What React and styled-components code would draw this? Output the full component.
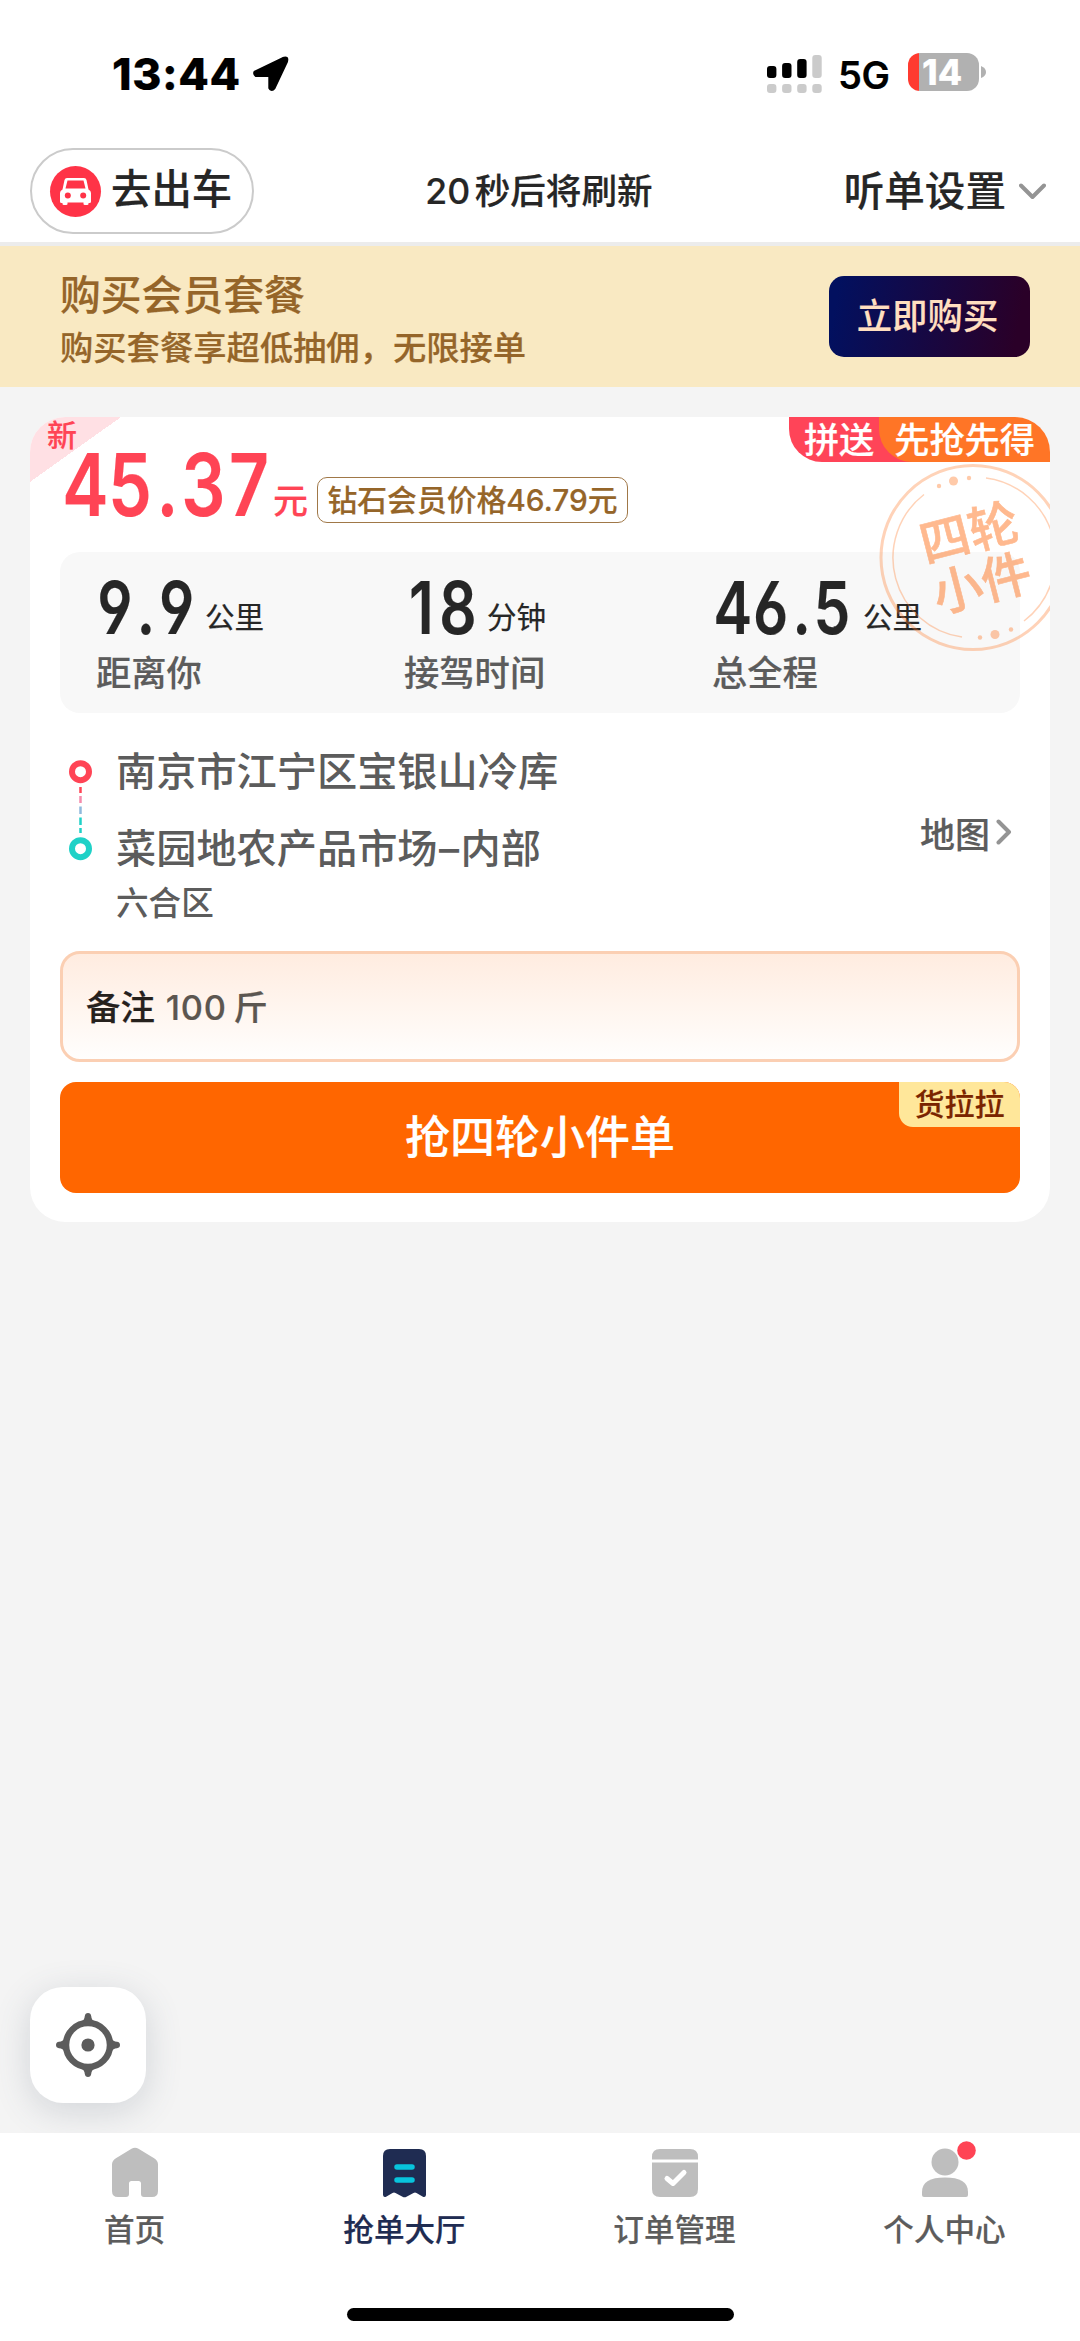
import styled, { createGlobalStyle } from 'styled-components';

const GlobalStyle = createGlobalStyle`
  * {
    box-sizing: border-box;
  }

  body {
    margin: 0;
    background-color: #f4f4f4;
    color: #262626;
    font-family: Inter, 'Noto Sans CJK SC', sans-serif;
    font-weight: 500;
    -webkit-text-stroke: 0.2px;
  }

  svg {
    display: block;
  }
`;

const Screen = styled.div`
  width: 1080px;
  height: 2341px;
  display: flex;
  flex-direction: column;
  overflow: hidden;
  white-space: nowrap;
`;

/* status bar */

const StatusBar = styled.div`
  height: 148px;
  padding: 50px 94px 0 112px;
  display: flex;
  justify-content: space-between;
  background-color: #fff;
  color: #000;
`;

const StatusGroup = styled.div`
  height: 48px;
  display: flex;
  align-items: center;
`;

const Clock = styled.span`
  width: 140px;
  font-size: 44.5px;
  font-weight: 800;
  letter-spacing: 0.6px;
  line-height: 48px;
`;

const Network = styled.span`
  width: 68px;
  padding: 2px 0 0 15px;
  font-size: 38px;
  font-weight: 600;
  letter-spacing: -0.5px;
`;

const Battery = styled.div`
  width: 71px;
  height: 38px;
  margin: -4px 2px 0 17px;
  padding-left: 14px;
  border-radius: 12px;
  background: linear-gradient(90deg, #ff3b30 10.5px, #b1b1b1 10.5px);
  color: #fff;
  font-size: 35.5px;
  font-weight: 800;
  line-height: 39px;
`;

/* header */

const Header = styled.div`
  height: 98px;
  padding: 0 34px 0 30px;
  display: flex;
  justify-content: space-between;
  align-items: flex-start;
  background-color: #fff;
  border-bottom: 4px solid #ececec;
`;

const GoButton = styled.div`
  width: 224px;
  height: 86px;
  padding-left: 18px;
  display: flex;
  align-items: center;
  border: 2px solid #cbcbcb;
  border-radius: 43px;
  font-size: 40.4px;
  line-height: 80px;
`;

const CarBadge = styled.div`
  width: 51px;
  height: 51px;
  margin-right: 10px;
  border-radius: 50%;
  background-color: #ff3347;
`;

const GoLabel = styled.span`
  padding-bottom: 2px;
`;

const Countdown = styled.div`
  width: 230px;
  margin-right: 17px;
  font-size: 35.6px;
  line-height: 88px;
  word-spacing: -5px;
`;

const Setting = styled.div`
  display: flex;
  align-items: center;
  gap: 13px;
  font-size: 40.6px;
  line-height: 87px;
`;

/* membership banner */

const Banner = styled.div`
  height: 141px;
  padding: 0 50px 0 60px;
  display: flex;
  justify-content: space-between;
  align-items: center;
  background-color: #f9e9c2;
  color: #956529;
`;

const BannerTitle = styled.div`
  padding-top: 4px;
  font-size: 40.8px;
  line-height: 58px;
`;

const BannerText = styled.div`
  font-size: 33.3px;
  line-height: 48px;
`;

const BuyButton = styled.div`
  width: 201px;
  height: 81px;
  padding-right: 4px;
  border-radius: 15px;
  background: linear-gradient(100deg, #02105f 5%, #2a0028 92%);
  color: #ffdfc0;
  font-size: 35.4px;
  line-height: 82px;
  text-align: center;
`;

/* order card */

const Main = styled.div`
  flex: 1;
  padding: 30px 30px 0;
  display: flex;
  flex-direction: column;
  justify-content: space-between;
  align-items: flex-start;
  background-color: #f4f4f4;
`;

const Card = styled.div`
  position: relative;
  width: 1020px;
  height: 805px;
  padding: 0 30px;
  border-radius: 35px;
  background-color: #fff;
  overflow: hidden;
`;

const NewCorner = styled.div`
  position: absolute;
  top: 0;
  left: 0;
  width: 91px;
  height: 65px;
  padding-left: 17px;
  background: linear-gradient(to bottom right, #ffe0e4 50%, transparent 50%);
  color: #ff4455;
  font-size: 30px;
  line-height: 37px;
`;

const Ribbons = styled.div`
  position: absolute;
  top: 0;
  right: 0;
  height: 45px;
  display: flex;
  color: #fff;
  font-size: 35.2px;
  line-height: 47px;
`;

const Ribbon = styled.div`
  height: 45px;
  padding-left: 15px;
  padding-right: ${(props) => (props.$tucked ? '43px' : '15px')};
  margin-right: ${(props) => (props.$tucked ? '-38px' : '0')};
  border-bottom-left-radius: 33px;
  background-color: ${(props) => props.$color};
`;

const Stamp = styled.svg`
  position: absolute;
  top: 43px;
  left: 846px;
`;

const PriceRow = styled.div`
  height: 135px;
  display: flex;
  align-items: flex-end;
  color: #ff4455;
`;

/* Inter squeezed to the width of a condensed face */
const Figure = styled.div`
  width: ${(props) => props.$width}px;
  margin-left: ${(props) => props.$indent || 0}px;
  margin-bottom: ${(props) => props.$lift || 0}px;
  font-size: ${(props) => props.$size}px;
  font-weight: 600;
  font-feature-settings: 'cv03' 1, 'cv04' 1;
  font-variant-numeric: ${(props) => (props.$loose ? 'normal' : 'tabular-nums')};
  letter-spacing: ${(props) => (props.$loose ? '7px' : '0')};
  line-height: 1;
  transform: scaleX(0.8);
  transform-origin: left;
`;

const Point = styled.span`
  margin: 0 0.07em;
`;

const Yuan = styled.div`
  width: 44px;
  font-size: 35px;
  line-height: 50px;
  margin-bottom: 26px;
`;

const MemberPrice = styled.div`
  width: 311px;
  height: 46px;
  margin-bottom: 29px;
  border: 1.5px solid #a07848;
  border-radius: 10px;
  color: #956529;
  font-size: 29.8px;
  line-height: 44px;
  text-align: center;
`;

const Stats = styled.div`
  height: 161px;
  padding: 0 35px 0 36px;
  display: grid;
  grid-template-columns: 308px 308px 1fr;
  border-radius: 20px;
  background-color: #f8f8f8;
`;

const StatValue = styled.div`
  height: 92px;
  display: flex;
  align-items: flex-end;
`;

const StatUnit = styled.span`
  font-size: 29.6px;
  font-weight: 400;
  line-height: 44px;
  padding-bottom: 5px;
`;

const StatLabel = styled.div`
  padding-top: 5px;
  color: #5c5c5c;
  font-size: 35.3px;
  line-height: 50px;
`;

const Route = styled.div`
  height: 238px;
  padding: 34px 8px 0;
  display: flex;
  color: #5c5c5c;
`;

const Stops = styled.div`
  flex: 1;
  padding: 2px 0 0 22px;
  -webkit-text-stroke: 0;
`;

const Stop = styled.div`
  height: 77px;
  font-size: 40.2px;
  line-height: 46px;
`;

const Dash = styled.span`
  margin: 0 1.5px;
`;

const District = styled.div`
  font-size: 32.6px;
  line-height: 40px;
  margin-top: -20px;
`;

const MapLink = styled.div`
  height: 150px;
  padding-top: 20px;
  display: flex;
  align-items: center;
  gap: 6px;
  font-size: 35px;
`;

const Remark = styled.div`
  height: 111px;
  padding-left: 23px;
  border: 3px solid #fbcfb3;
  border-radius: 20px;
  background: linear-gradient(#ffece0, #fffefd);
  color: #5c5650;
  font-size: 34.4px;
  line-height: 107px;
  word-spacing: -3px;

  b {
    margin-right: 11px;
    color: #26211d;
    font-weight: 500;
  }
`;

const Weight = styled.span`
  letter-spacing: 0.7px;
`;

const GrabButton = styled.div`
  position: relative;
  height: 111px;
  margin-top: 20px;
  border-radius: 16px;
  background-color: #ff6600;
  color: #fff;
  font-size: 45px;
  line-height: 112px;
  text-align: center;
  overflow: hidden;
`;

const Platform = styled.span`
  position: absolute;
  top: 0;
  right: 0;
  width: 121px;
  height: 45px;
  border-bottom-left-radius: 14px;
  background-color: #ffe79a;
  color: #7a2400;
  font-size: 30px;
  line-height: 45px;
`;

const Locate = styled.div`
  width: 116px;
  height: 116px;
  margin-bottom: 30px;
  display: grid;
  place-items: center;
  border-radius: 33px;
  background-color: #fff;
  box-shadow: 0 8px 36px rgba(70, 85, 105, 0.2);
`;

/* bottom tabs */

const TabBar = styled.div`
  position: relative;
  height: 208px;
  display: flex;
  flex-direction: column;
  align-items: center;
  justify-content: space-between;
  background-color: #fff;
  padding-bottom: 20px;
`;

const Tabs = styled.div`
  width: 100%;
  display: grid;
  grid-template-columns: repeat(4, 1fr);
`;

const Tab = styled.div`
  padding: 13px 1px 0 0;
  display: flex;
  flex-direction: column;
  align-items: center;
  color: ${(props) => (props.$active ? '#1f2c52' : '#5c5c5c')};
  font-size: 30.6px;
  line-height: 44px;

  svg {
    margin-bottom: 10px;
    overflow: visible;
  }
`;

const HomeIndicator = styled.div`
  width: 387px;
  height: 13px;
  border-radius: 7px;
  background-color: #000;
`;

const ArrowIcon = () => (
  <svg width="38" height="38" viewBox="0 0 38 38">
    <path
      d="M3 17 L31 3.5 Q36 1.5 34.5 6.500 L22 33 Q20.500 35 18.500 34 L17.800 33 V20.500 H4 Q2 19 3 17 Z"
      stroke="#000"
      strokeWidth="3"
      strokeLinejoin="round"
    />
  </svg>
);

const SignalIcon = () => (
  <svg width="56" height="40" viewBox="0 0 56 40">
    {[12, 9, 5, 1].map((top, i) => (
      <g key={top} fill={i < 3 ? '#000' : '#cbcbcb'}>
        <rect x={i * 15.1} y={top} width="9.4" height={24 - top} rx="3" />
        <rect x={i * 15.1} y="30" width="9.4" height="9" rx="3" fill="#cbcbcb" />
      </g>
    ))}
  </svg>
);

const CarIcon = () => (
  <svg width="51" height="51" viewBox="0 0 51 51">
    <path
      d="M17 12 H34 Q36 12 36.500 14 L38.500 23.500 Q41 24.500 41 27 V35.500 Q41 37 39.500 37 H38.500 V38 Q38.500 39 37 39 H35 Q33.500 39 33.500 38 V36.500 H17.500 V38 Q17.500 39 16 39 H14 Q12.500 39 12.500 38 V37 H11.500 Q10 37 10 35.500 V27 Q10 24.500 12.500 23.500 L14.500 14 Q15 12 17 12 Z"
      fill="#fff"
    />
    <path d="M17.500 14.500 H33.500 L35.500 22.500 H15.500 Z" fill="#ff3347" />
    <circle cx="17.800" cy="29.500" r="3" fill="#ff3347" />
    <circle cx="33.200" cy="29.500" r="3" fill="#ff3347" />
  </svg>
);

const Chevron = ({ d, width, height }) => (
  <svg width={width} height={height}>
    <path
      d={d}
      fill="none"
      stroke="#949494"
      strokeWidth="4"
      strokeLinecap="round"
      strokeLinejoin="round"
    />
  </svg>
);

const StampMark = () => (
  <Stamp width="190" height="196" viewBox="0 0 190 196" fill="#ff7a2a">
    <g fill="none" stroke="#ff7a2a" opacity="0.33">
      <circle cx="97" cy="97.500" r="92" strokeWidth="3" />
      <path d="M48 34.500 A80 80 0 0 0 86 177" strokeWidth="1.500" />
      <path d="M110 18 A80 80 0 0 1 148 161" strokeWidth="1.500" />
    </g>
    <g opacity="0.4">
      <circle cx="63" cy="26" r="2.200" />
      <circle cx="77.500" cy="21" r="4.500" />
      <circle cx="93" cy="18" r="2.200" />
      <circle cx="104" cy="177.500" r="2.200" />
      <circle cx="119" cy="174.500" r="4.500" />
      <circle cx="135" cy="169.500" r="2.200" />
    </g>
    <g
      opacity="0.52"
      fontSize="50"
      textAnchor="middle"
      stroke="#ff7a2a"
      strokeWidth="0.6"
      transform="rotate(-14.5 100 97)"
    >
      <text x="99.500" y="90">
        四轮
      </text>
      <text x="99" y="142">
        小件
      </text>
    </g>
  </Stamp>
);

const RouteLine = () => (
  <svg width="26" height="116" viewBox="0 0 26 116">
    <circle cx="12.500" cy="24.700" r="8.500" fill="none" stroke="#ff4455" strokeWidth="6" />
    <g strokeWidth="2.500">
      <path d="M12.500 40 V46" stroke="#ff4455" />
      <path d="M12.500 49 V56" stroke="#f58bab" />
      <path d="M12.500 59.500 V67" stroke="#8fb9dc" />
      <path d="M12.500 70.500 V78" stroke="#1fd1c7" />
      <path d="M12.500 81 V86" stroke="#1fd1c7" />
    </g>
    <circle cx="12.500" cy="101.700" r="8.500" fill="none" stroke="#1fd1c7" strokeWidth="6" />
  </svg>
);

const LocateIcon = () => (
  <svg width="66" height="66" viewBox="-33 -33 66 66">
    <circle r="22" fill="none" stroke="#5c5c5c" strokeWidth="6.500" />
    <circle r="6.600" fill="#5c5c5c" />
    {[0, 90, 180, 270].map((angle) => (
      <path
        key={angle}
        d="M-6.500 -23.500 Q-3.500 -25 -3.200 -29 Q-2.800 -32 0 -32 Q2.800 -32 3.200 -29 Q3.500 -25 6.500 -23.500 Z"
        transform={`rotate(${angle})`}
        fill="#5c5c5c"
      />
    ))}
  </svg>
);

const HomeIcon = () => (
  <svg width="46" height="52" viewBox="0 0 46 52">
    <path
      d="M19.500 2.800 Q23 0.800 26.500 2.800 L42.500 12.500 Q46 14.800 46 18.500 V45 Q46 51 40 51 H32 Q29 51 29 48 V37.500 Q29 35 26.500 35 H19.500 Q17 35 17 37.500 V48 Q17 51 14 51 H6 Q0 51 0 45 V18.500 Q0 14.800 3.500 12.500 Z"
      fill="#bebebe"
    />
  </svg>
);

const HallIcon = () => (
  <svg width="43" height="52" viewBox="0 0 43 52">
    <path
      d="M7 3 H36 Q43 3 43 10 V49 Q42.500 52 39.500 50.500 L33.500 47 Q32 46 30.500 47 L23.500 50.800 Q21.500 51.800 19.500 50.800 L12.500 47 Q11 46 9.500 47 L3.500 50.500 Q0.500 52 0 49 V10 Q0 3 7 3 Z"
      fill="#1f2c52"
    />
    <path
      d="M14 21 H29 M14 34 H29"
      stroke="#08c4dc"
      strokeWidth="5.500"
      strokeLinecap="round"
    />
  </svg>
);

const OrderIcon = () => (
  <svg width="46" height="52" viewBox="0 0 46 52">
    <path
      d="M8 3 H38 Q46 3 46 11 V13.500 H0 V11 Q0 3 8 3 Z M0 16.500 H46 V43 Q46 51 38 51 H8 Q0 51 0 43 Z"
      fill="#bebebe"
    />
    <path
      d="M15 32.500 L21 37.500 L32 26.500"
      fill="none"
      stroke="#fff"
      strokeWidth="5"
      strokeLinecap="round"
      strokeLinejoin="round"
    />
  </svg>
);

const ProfileIcon = () => (
  <svg width="46" height="52" viewBox="0 0 46 52">
    <circle cx="23" cy="16" r="13.500" fill="#bebebe" />
    <path
      d="M0 49 V46 C0 36 8 31.500 23 31.500 C38 31.500 46 36 46 46 V49 Q46 51 44 51 H2 Q0 51 0 49 Z"
      fill="#bebebe"
    />
    <circle cx="44.500" cy="4.500" r="9.300" fill="#ff4455" />
  </svg>
);

const Amount = ({ value, ...rest }) => {
  const [whole, decimals] = value.split('.');

  return (
    <Figure {...rest}>
      {whole}
      {decimals && <Point>.</Point>}
      {decimals}
    </Figure>
  );
};

const stats = [
  { value: '9.9', unit: '公里', label: '距离你', width: 109 },
  { value: '18', unit: '分钟', label: '接驾时间', width: 78, indent: 5, loose: true },
  { value: '46.5', unit: '公里', label: '总全程', width: 149, indent: 2 },
];

const tabs = [
  { label: '首页', Icon: HomeIcon },
  { label: '抢单大厅', Icon: HallIcon, active: true },
  { label: '订单管理', Icon: OrderIcon },
  { label: '个人中心', Icon: ProfileIcon },
];

const App = () => (
  <>
    <GlobalStyle />
    <Screen>
      <StatusBar>
        <StatusGroup>
          <Clock>13:44</Clock>
          <ArrowIcon />
        </StatusGroup>
        <StatusGroup>
          <SignalIcon />
          <Network>5G</Network>
          <Battery>14</Battery>
          <svg width="5" height="16">
            <path d="M0 0 Q5 2 5 6 Q5 10 0 12 Z" fill="#b1b1b1" />
          </svg>
        </StatusGroup>
      </StatusBar>

      <Header>
        <GoButton>
          <CarBadge>
            <CarIcon />
          </CarBadge>
          <GoLabel>去出车</GoLabel>
        </GoButton>
        <Countdown>20 秒后将刷新</Countdown>
        <Setting>
          听单设置
          <Chevron d="M2 2.500 L13.500 14 L25 2.500" width={27} height={17} />
        </Setting>
      </Header>

      <Banner>
        <div>
          <BannerTitle>购买会员套餐</BannerTitle>
          <BannerText>购买套餐享超低抽佣，无限接单</BannerText>
        </div>
        <BuyButton>立即购买</BuyButton>
      </Banner>

      <Main>
        <Card>
          <NewCorner>新</NewCorner>
          <Ribbons>
            <Ribbon $color="#ff4458" $tucked>
              拼送
            </Ribbon>
            <Ribbon $color="#ff7526">先抢先得</Ribbon>
          </Ribbons>
          <PriceRow>
            <Amount value="45.37" $size={87} $width={210} $indent={3} $lift={24} />
            <Yuan>元</Yuan>
            <MemberPrice>钻石会员价格46.79元</MemberPrice>
          </PriceRow>
          <Stats>
            {stats.map(({ value, unit, label, width, indent, loose }) => (
              <div key={label}>
                <StatValue>
                  <Amount
                    value={value}
                    $size={73}
                    $width={width}
                    $indent={indent}
                    $loose={loose}
                  />
                  <StatUnit>{unit}</StatUnit>
                </StatValue>
                <StatLabel>{label}</StatLabel>
              </div>
            ))}
          </Stats>
          <StampMark />
          <Route>
            <RouteLine />
            <Stops>
              <Stop>南京市江宁区宝银山冷库</Stop>
              <Stop>
                菜园地农产品市场<Dash>–</Dash>内部
              </Stop>
              <District>六合区</District>
            </Stops>
            <MapLink>
              地图
              <Chevron d="M2.500 2.500 L13 13 L2.500 23.500" width={16} height={26} />
            </MapLink>
          </Route>
          <Remark>
            <b>备注</b>
            <Weight>100 斤</Weight>
          </Remark>
          <GrabButton>
            抢四轮小件单
            <Platform>货拉拉</Platform>
          </GrabButton>
        </Card>
        <Locate>
          <LocateIcon />
        </Locate>
      </Main>

      <TabBar>
        <Tabs>
          {tabs.map(({ label, Icon, active }) => (
            <Tab key={label} $active={active}>
              <Icon />
              {label}
            </Tab>
          ))}
        </Tabs>
        <HomeIndicator />
      </TabBar>
    </Screen>
  </>
);

export default App;
